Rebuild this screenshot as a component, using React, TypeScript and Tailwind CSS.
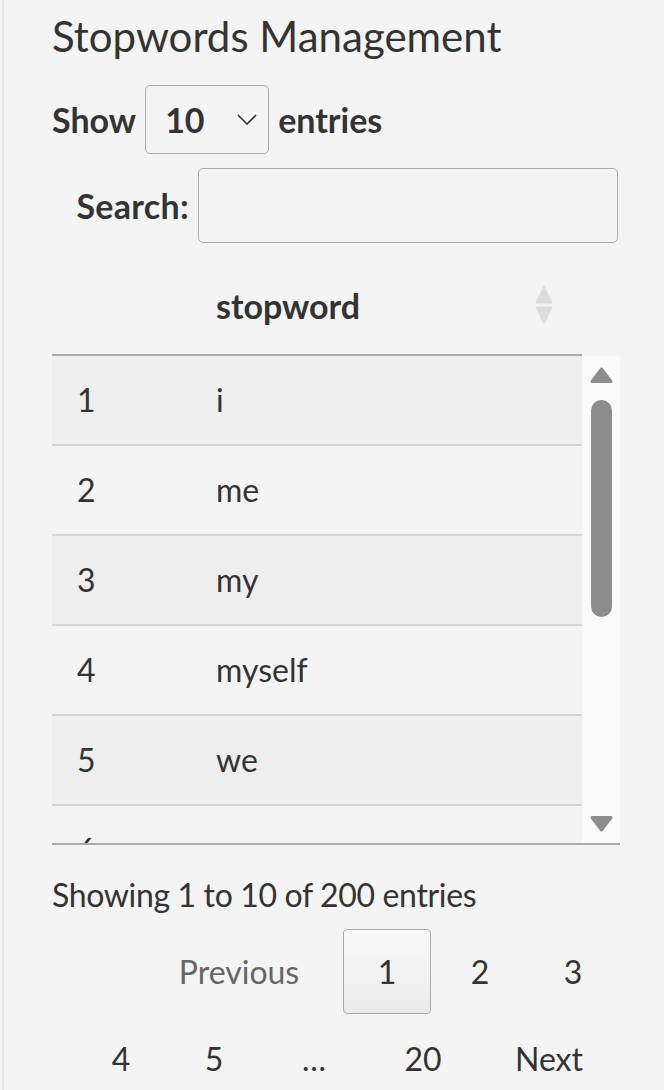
import React from "react";

const rows: [number, string][] = [
  [1, "i"],
  [2, "me"],
  [3, "my"],
  [4, "myself"],
  [5, "we"],
  [6, "our"],
];

function Tri({ down }: { down?: boolean }) {
  return (
    <svg width="23" height="17" viewBox="0 0 23 17" className="block">
      <path
        d={down ? "M11.5 15 L21 2.5 H2 Z" : "M11.5 2 L21 14.5 H2 Z"}
        fill="#8c8c8c"
        stroke="#8c8c8c"
        strokeWidth="3"
        strokeLinejoin="round"
      />
    </svg>
  );
}

export default function App() {
  return (
    <div className="min-h-screen bg-[#f4f4f4] pl-[2px] text-[#333] font-['Lato',sans-serif]">
      <div className="min-h-[1090px] border-l-2 border-[#e2e6eb] pl-[48px] pr-[44px]">
        <h1 className="pt-[6px] h-[66px] text-[42px] leading-[60px] font-normal whitespace-nowrap">
          Stopwords Management
        </h1>

        <div className="mt-[19px] flex items-center h-[69px] text-[34px] font-bold">
          <span>Show</span>
          <div className="ml-[9px] w-[124px] h-[69px] border-[1.5px] border-[#aaa] rounded-[5px] flex items-center justify-between pl-[19px] pr-[11px]">
            <span>10</span>
            <svg width="20" height="11" viewBox="0 0 20 11">
              <path d="M1 1 L10 10 L19 1" fill="none" stroke="#333" strokeWidth="1.6" />
            </svg>
          </div>
          <span className="ml-[9px]">entries</span>
        </div>

        <div className="mt-[14px] mr-[2px] flex justify-end items-center gap-[9px] h-[75px]">
          <span className="text-[34px] font-bold tracking-[0.3px]">Search:</span>
          <div className="w-[420px] h-[75px] border-[1.5px] border-[#aaa] rounded-[5px]" />
        </div>

        <div className="mt-[13px] mr-[38px] h-[100px] border-b-2 border-[#aaa] flex items-center text-[34px] font-bold">
          <div className="w-[164px]" />
          <span className="flex-1">stopword</span>
          <svg width="18" height="40" viewBox="0 0 18 40" className="mr-[29px]">
            <path d="M9 1 L17 18 H1 Z" fill="#dcdcdc" stroke="#dcdcdc" strokeWidth="1" strokeLinejoin="round" />
            <path d="M9 39 L17 22 H1 Z" fill="#dcdcdc" stroke="#dcdcdc" strokeWidth="1" strokeLinejoin="round" />
          </svg>
        </div>

        <div className="flex h-[489px] overflow-hidden border-b-2 border-[#aaa]">
          <div className="flex-1 flex flex-col text-[32px]">
            {rows.map(([n, w], i) => (
              <div
                key={n}
                className={
                  i % 2 === 0
                    ? "flex items-center h-[90px] shrink-0 border-b-2 border-[#d3d3d3] bg-[#eeeeee]"
                    : "flex items-center h-[90px] shrink-0 border-b-2 border-[#d3d3d3]"
                }
              >
                <span className="w-[164px] pl-[25px]">{n}</span>
                <span>{w}</span>
              </div>
            ))}
          </div>
          <div className="w-[38px] bg-[#fafafa] flex flex-col items-center pt-[11px] pb-[11px]">
            <Tri />
            <div className="mt-[16px] w-[21px] h-[217px] rounded-full bg-[#8c8c8c]" />
            <div className="flex-1" />
            <Tri down />
          </div>
        </div>

        <div className="mt-[25px] h-[50px] leading-[50px] text-[32px] tracking-[-0.35px] whitespace-nowrap">
          Showing 1 to 10 of 200 entries
        </div>

        <div className="mt-[9px] mr-[3px] flex flex-wrap justify-end gap-x-[5px] gap-y-[2px] text-[32px]">
          <div className="w-[198px] h-[85px] flex items-center justify-center border border-transparent text-[#666]">Previous</div>
          <div className="w-[88px] h-[85px] flex items-center justify-center border-[1.5px] border-[#aaa] rounded-[4px] bg-gradient-to-b from-[#f9f9f9] to-[#ebebeb]">1</div>
          <div className="w-[88px] h-[85px] flex items-center justify-center border border-transparent">2</div>
          <div className="w-[88px] h-[85px] flex items-center justify-center border border-transparent">3</div>
          <div className="w-[88px] h-[85px] flex items-center justify-center border border-transparent">4</div>
          <div className="w-[88px] h-[85px] flex items-center justify-center border border-transparent">5</div>
          <div className="w-[102px] h-[85px] flex items-center justify-center">…</div>
          <div className="w-[106px] h-[85px] flex items-center justify-center border border-transparent">20</div>
          <div className="w-[136px] h-[85px] flex items-center justify-center border border-transparent">Next</div>
        </div>
      </div>
    </div>
  );
}
